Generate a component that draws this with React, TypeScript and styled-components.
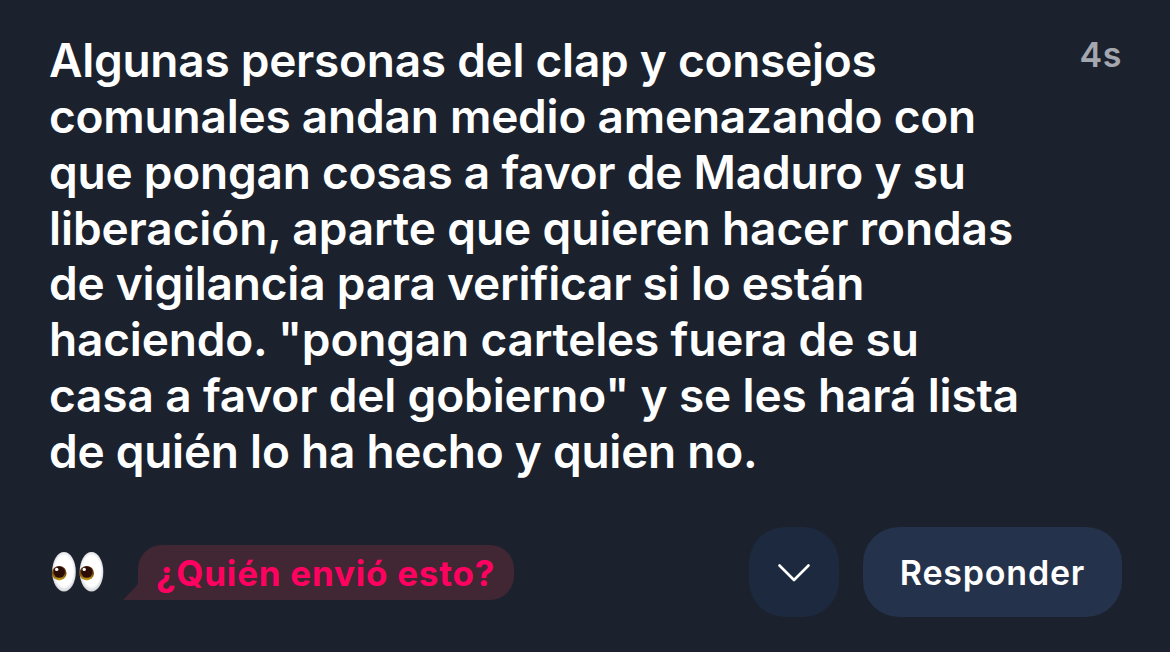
import React from "react";
import styled, { createGlobalStyle } from "styled-components";

const GlobalStyle = createGlobalStyle`
  * {
    box-sizing: border-box;
  }

  body {
    margin: 0;
    background: #1b222e;
    font-family: Inter, "Liberation Sans", sans-serif;
  }
`;

const Card = styled.article`
  display: flex;
  flex-direction: column;
  width: 1170px;
  height: 652px;
  padding: 33px 48px 35px 49px;
  background: #1b222e;
  overflow: hidden;
`;

const Header = styled.div`
  display: flex;
  justify-content: space-between;
  align-items: flex-start;
`;

const Message = styled.p`
  margin: 0;
  color: #fff;
  font-size: 46px;
  font-weight: 600;
  line-height: 55.86px;
`;

const Line = styled.span<{ $spacing: number }>`
  display: block;
  white-space: nowrap;
  letter-spacing: ${({ $spacing }) => $spacing}px;
`;

const Time = styled.time`
  color: #a5a7ae;
  font-size: 34px;
  font-weight: 600;
  letter-spacing: 0.6px;
  line-height: 43px;
`;

const Footer = styled.div`
  display: flex;
  align-items: center;
  margin-top: auto;
  height: 90px;
`;

const Eyes = styled.svg`
  flex: none;
  width: 54px;
  height: 42px;
  margin-left: 1px;
`;

const Hint = styled.div`
  display: flex;
  align-items: center;
  position: relative;
  width: 376px;
  height: 55px;
  margin-left: 34px;
  padding: 1px 0 0 18px;
  border-radius: 24px 24px 24px 0;
  background: #402733;
  color: #ff0160;
  font-size: 35px;
  font-weight: 700;
  letter-spacing: 0.77px;
  white-space: nowrap;
`;

const Tail = styled.svg`
  position: absolute;
  left: -15px;
  bottom: 0;
  width: 15px;
  height: 18px;
`;

const Actions = styled.div`
  display: flex;
  gap: 24px;
  margin-left: auto;
`;

const Button = styled.button<{ $width: number; $color: string }>`
  display: flex;
  align-items: center;
  justify-content: center;
  width: ${({ $width }) => $width}px;
  height: 90px;
  padding: 0;
  border: 0;
  border-radius: 36px;
  background: ${({ $color }) => $color};
  color: #fff;
  font-family: inherit;
  font-size: 34px;
  font-weight: 600;
  letter-spacing: 0.8px;
`;

const Chevron = styled.svg`
  width: 34px;
  height: 20px;
  margin-top: 1px;
`;

const lines = [
  { text: "Algunas personas del clap y consejos", spacing: -0.27 },
  { text: "comunales andan medio amenazando con", spacing: -0.22 },
  { text: "que pongan cosas a favor de Maduro y su", spacing: -0.23 },
  { text: "liberación, aparte que quieren hacer rondas", spacing: -0.1 },
  { text: "de vigilancia para verificar si lo están", spacing: -0.22 },
  { text: 'haciendo. "pongan carteles fuera de su', spacing: -0.18 },
  { text: 'casa a favor del gobierno" y se les hará lista', spacing: -0.15 },
  { text: "de quién lo ha hecho y quien no.", spacing: -0.25 },
];

const EyesIcon = () => (
  <Eyes viewBox="0 0 54 42">
    <defs>
      <radialGradient id="white" cx="50%" cy="48%" r="55%">
        <stop offset="0.7" stopColor="#fff" />
        <stop offset="1" stopColor="#c6c8ce" />
      </radialGradient>
      <linearGradient id="iris" x1="0" y1="0" x2="0" y2="1">
        <stop offset="0" stopColor="#49230a" />
        <stop offset="0.6" stopColor="#80530a" />
        <stop offset="1" stopColor="#c9a51d" />
      </linearGradient>
    </defs>
    {[0, 27.5].map((x) => (
      <g key={x} transform={`translate(${x} 0)`}>
        <ellipse cx="14" cy="20.7" rx="11.8" ry="19.8" fill="url(#white)" />
        <circle cx="9.2" cy="22.2" r="7.3" fill="url(#iris)" />
        <circle cx="9.3" cy="21.2" r="5.6" fill="#2c0d05" />
        <circle cx="6.7" cy="18.4" r="1.7" fill="#fff" />
      </g>
    ))}
  </Eyes>
);

const App = () => {
  return (
    <>
      <GlobalStyle />
      <Card>
        <Header>
          <Message>
            {lines.map((line) => (
              <Line key={line.text} $spacing={line.spacing}>
                {line.text}
              </Line>
            ))}
          </Message>
          <Time>4s</Time>
        </Header>
        <Footer>
          <EyesIcon />
          <Hint>
            <Tail viewBox="0 0 15 18">
              <path d="M15 0C14.800 2 13.500 4 11.500 6L0 18H15Z" fill="#402733" />
            </Tail>
            ¿Quién envió esto?
          </Hint>
          <Actions>
            <Button $width={90} $color="#1d293e" aria-label="Más">
              <Chevron viewBox="0 0 34 20" fill="none">
                <path
                  d="M2.500 2.500L17 17L31.500 2.500"
                  stroke="#fff"
                  strokeWidth="2.600"
                  strokeLinecap="round"
                  strokeLinejoin="round"
                />
              </Chevron>
            </Button>
            <Button $width={259} $color="#25324b">
              Responder
            </Button>
          </Actions>
        </Footer>
      </Card>
    </>
  );
};

export default App;
